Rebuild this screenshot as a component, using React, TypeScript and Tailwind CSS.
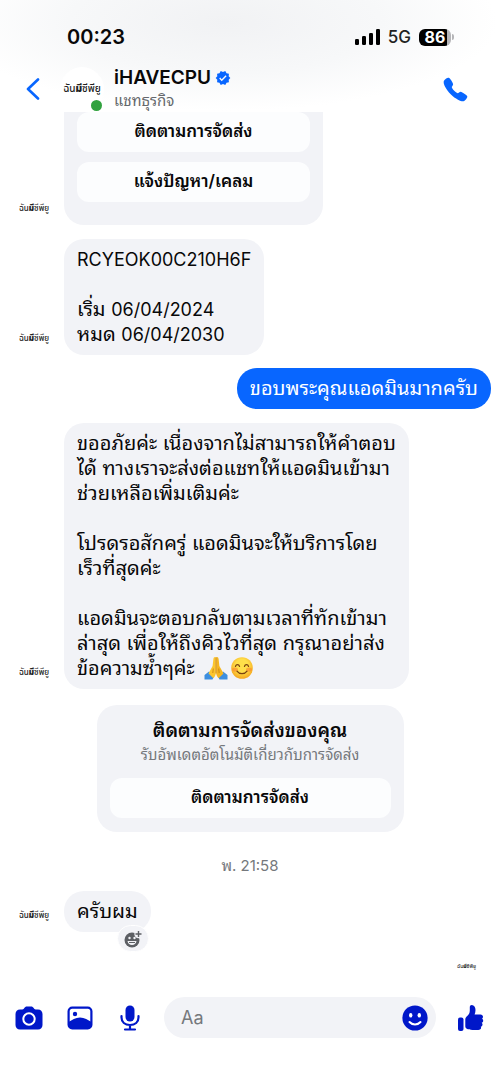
import { IoCall } from 'react-icons/io5';
import { MdVerified } from 'react-icons/md';

const AUTO_REPLY = [
  'ขออภัยค่ะ เนื่องจากไม่สามารถให้คำตอบ',
  'ได้ ทางเราจะส่งต่อแชทให้แอดมินเข้ามา',
  'ช่วยเหลือเพิ่มเติมค่ะ',
  '',
  'โปรดรอสักครู่ แอดมินจะให้บริการโดย',
  'เร็วที่สุดค่ะ',
  '',
  'แอดมินจะตอบกลับตามเวลาที่ทักเข้ามา',
  'ล่าสุด เพื่อให้ถึงคิวไวที่สุด กรุณาอย่าส่ง',
];

function BrandMark({ className }: { className: string }) {
  return (
    <span className={`font-['Noto_Sans_Thai',sans-serif] leading-none font-medium whitespace-nowrap text-[#222222] ${className}`}>
      ฉัน<b className="font-black">มี</b>ซีพียู
    </span>
  );
}

function PageAvatar() {
  return (
    <div className="flex w-16 shrink-0 justify-center pb-3 pl-1">
      <BrandMark className="text-[8px]" />
    </div>
  );
}

function FoldedHands() {
  return (
    <svg viewBox="0 0 24 24" className="ml-1 inline-block h-6 w-6 align-[-5px]" aria-label="🙏" role="img">
      <path d="M0.5 23.5V19L5 15.500l5 5-1.500 3zM23.500 23.500V19L19 15.500l-5 5 1.500 3z" fill="#3d8fe0" />
      <path d="M11.800 1.200c-1.300-.7-2.200.3-2.400 1.800L8.600 10 4.500 17.500l4.800 4.700c1.800-1.600 2.500-3.400 2.500-5.400z" fill="#fcc62d" />
      <path d="M12.200 1.200c1.300-.7 2.200.3 2.400 1.800l.8 7 4.100 7.500-4.800 4.700c-1.800-1.600-2.500-3.400-2.500-5.400z" fill="#f5b51f" />
      <path d="M12 1.500v16M9.300 12.500 8.800 17M14.700 12.500l.5 4.500" stroke="#c47d0b" strokeWidth="0.8" fill="none" />
    </svg>
  );
}

function SmilingFace() {
  return (
    <svg viewBox="0 0 24 24" className="ml-[2px] inline-block h-6 w-6 align-[-5px]" aria-label="😊" role="img">
      <defs>
        <radialGradient id="face" cx="50%" cy="40%" r="60%">
          <stop offset="0.5" stopColor="#ffdf4a" />
          <stop offset="1" stopColor="#f5a51c" />
        </radialGradient>
      </defs>
      <circle cx="12" cy="12" r="10.8" fill="url(#face)" />
      <ellipse cx="5" cy="13.6" rx="3" ry="2" fill="#f8832f" opacity="0.6" />
      <ellipse cx="19" cy="13.6" rx="3" ry="2" fill="#f8832f" opacity="0.6" />
      <path
        d="M5.500 10.300c.6-2.300 3.400-2.300 4 0M14.500 10.300c.6-2.300 3.400-2.300 4 0M7 15.200c2.300 3.300 7.700 3.300 10 0"
        fill="none"
        stroke="#7a4210"
        strokeWidth="1.3"
        strokeLinecap="round"
      />
    </svg>
  );
}

function StatusBar() {
  return (
    <div className="flex items-center justify-between pt-6 pr-[46px] pl-[67px]">
      <span className="text-[20px] leading-[26px] font-semibold">00:23</span>
      <div className="flex items-center gap-2">
        <svg viewBox="0 0 25 16" className="h-4 w-[25px]" fill="#000">
          <rect x="0" y="10" width="4" height="6" rx="1.2" />
          <rect x="7" y="7" width="4" height="9" rx="1.2" />
          <rect x="14" y="4" width="4" height="12" rx="1.2" />
          <rect x="21" y="0" width="4" height="16" rx="1.2" />
        </svg>
        <span className="text-[17px] leading-[26px] font-medium text-[#222222]">5G</span>
        <div className="flex items-center gap-px">
          <span className="flex h-[17px] w-8 items-center justify-center rounded-md bg-[linear-gradient(90deg,#000_86%,#b5b5b8_86%)] text-[16px] leading-none font-bold text-white">
            86
          </span>
          <span className="h-[6px] w-[2px] rounded-r-full bg-[#b5b5b8]" />
        </div>
      </div>
    </div>
  );
}

function ChatHeader() {
  return (
    <div className="flex items-center pt-4 pr-[31px] pl-[26px]">
      <button type="button" aria-label="Back" className="w-[34px]">
        <svg viewBox="0 0 14 22" className="h-[22px] w-[14px]" fill="none" stroke="#0866ff" strokeWidth="2.6" strokeLinecap="round" strokeLinejoin="round">
          <path d="M12 1.500 2 11l10 9.500" />
        </svg>
      </button>
      <div className="relative flex h-11 w-11 items-center justify-center rounded-full bg-white">
        <BrandMark className="text-[10px]" />
        <span className="absolute right-[2px] bottom-0 h-[11px] w-[11px] rounded-full bg-[#31a23f]" />
      </div>
      <div className="min-w-0 flex-1 pl-[10px]">
        <h1 className="flex items-center gap-1 text-[19px] leading-6 font-semibold">
          iHAVECPU
          <MdVerified className="h-4 w-4 text-[#0866ff]" />
        </h1>
        <p className="text-[15px] leading-[22px] text-[#65686c]">แชทธุรกิจ</p>
      </div>
      <button type="button" aria-label="Call">
        <IoCall className="h-[27px] w-[27px] text-[#0866ff]" />
      </button>
    </div>
  );
}

function ReplyButton({ label }: { label: string }) {
  return (
    <button type="button" className="h-10 w-full rounded-xl bg-[#fcfdfe] text-[17px] font-semibold">
      {label}
    </button>
  );
}

function Composer() {
  return (
    <footer className="flex items-center pt-7 pr-4 pb-12 pl-[15px]">
      <div className="flex gap-6 text-[#0017c9]">
        <button type="button" aria-label="Camera">
          <svg viewBox="0 0 28 26" className="h-[26px] w-7" fill="currentColor">
            <path d="M9.500 2.800C10.300 1.800 11 1.500 12 1.500h4c1 0 1.700.3 2.500 1.300l.7.9c.4.5.9.8 1.600.8H23c2.700 0 4.500 1.800 4.500 4.500V20c0 2.700-1.800 4.500-4.500 4.500H5C2.300 24.500.5 22.700.5 20V9c0-2.700 1.800-4.500 4.500-4.500h2.200c.7 0 1.200-.3 1.600-.8z" />
            <circle cx="14" cy="14" r="5.700" fill="none" stroke="#fff" strokeWidth="2" />
          </svg>
        </button>
        <button type="button" aria-label="Photos">
          <svg viewBox="0 0 26 26" className="h-[26px] w-[26px]">
            <rect x="1.600" y="2.600" width="22.800" height="20.800" rx="3.600" fill="none" stroke="currentColor" strokeWidth="2.200" />
            <circle cx="8" cy="9" r="2.200" fill="currentColor" />
            <path d="M1.500 17C5 15 8.500 12.500 13 12.500s8 2.500 11.500 4.500v3a3.500 3.500 0 0 1-3.500 3.500H5a3.500 3.500 0 0 1-3.500-3.500z" fill="currentColor" />
          </svg>
        </button>
        <button type="button" aria-label="Voice message">
          <svg viewBox="0 0 26 26" className="h-[26px] w-[26px]">
            <rect x="8.500" y="0.500" width="9" height="16" rx="4.500" fill="currentColor" />
            <path d="M4.500 11v1.500c0 4.500 3.500 7.500 8.500 7.500s8.500-3 8.500-7.500V11M13 20v4M8 24.500h10" fill="none" stroke="currentColor" strokeWidth="2.200" strokeLinecap="round" />
          </svg>
        </button>
      </div>
      <div className="ml-[21px] flex h-[41px] min-w-0 flex-1 items-center rounded-full bg-[#f2f3f7] pr-2 pl-[17px]">
        <input
          type="text"
          aria-label="Message"
          placeholder="Aa"
          className="min-w-0 flex-1 bg-transparent text-[18px] outline-none placeholder:text-[#75787c]"
        />
        <button type="button" aria-label="Emoji" className="text-[#0017c9]">
          <svg viewBox="0 0 26 26" className="h-[26px] w-[26px]">
            <circle cx="13" cy="13" r="12.600" fill="currentColor" />
            <ellipse cx="8.700" cy="10.300" rx="1.700" ry="2.200" fill="#fff" />
            <ellipse cx="17.300" cy="10.300" rx="1.700" ry="2.200" fill="#fff" />
            <path d="M7.500 17c2.800 3.200 8.200 3.200 11 0" fill="none" stroke="#fff" strokeWidth="2" strokeLinecap="round" />
          </svg>
        </button>
      </div>
      <button type="button" aria-label="Like" className="ml-[21px] text-[#0017c9]">
        <svg viewBox="0 0 27 28" className="h-7 w-[27px]" fill="currentColor">
          <rect x="1" y="13.500" width="5.500" height="13.500" rx="2" />
          <path d="M8.300 15.500c0-1.500.6-2.400 1.700-3.300 1.800-1.500 2.800-3.200 2.800-5.700V3.300c0-1.500.8-2.300 2-2.300 2.300 0 3.700 2.200 3.700 5 0 1.800-.4 3.200-.9 4.500h5.900c1.500 0 2.500 1 2.500 2.300 0 .9-.4 1.500-1 1.900.7.4 1.200 1.100 1.200 2 0 1-.6 1.800-1.500 2.100.5.4.8 1 .8 1.700 0 1.100-.7 1.900-1.700 2.200.2.300.3.700.3 1.100 0 1.300-1.200 2.100-2.900 2.100h-5.700c-2.500 0-4.300-.4-5.700-1.200-1-.6-1.500-1.300-1.500-2.500z" />
        </svg>
      </button>
    </footer>
  );
}

export default function App() {
  return (
    <div className="min-h-screen bg-white font-[Inter,'Noto_Sans_Thai_Looped','Noto_Sans_Thai','Noto_Sans',sans-serif] text-[#080809]">
      <header className="bg-[radial-gradient(ellipse_at_45%_20%,#f1f2f4_0%,#f7f8f9_40%,#ffffff_70%)]">
        <StatusBar />
        <ChatHeader />
      </header>

      <main>
        <div className="flex items-end">
          <PageAvatar />
          <div className="flex w-[259px] flex-col gap-[10px] rounded-b-[20px] bg-[#f2f3f7] px-[13px] pb-[23px]">
            <ReplyButton label="ติดตามการจัดส่ง" />
            <ReplyButton label="แจ้งปัญหา/เคลม" />
          </div>
        </div>

        <div className="mt-[14px] flex items-end">
          <PageAvatar />
          <p className="rounded-[20px] bg-[#f2f3f7] px-[13px] py-2 text-[20px] leading-[25px]">
            <span className="text-[18px]">RCYEOK00C210H6F</span>
            <br />
            <br />
            เริ่ม <span className="text-[18px]">06/04/2024</span>
            <br />
            หมด <span className="text-[18px]">06/04/2030</span>
          </p>
        </div>

        <div className="mt-[13px] flex justify-end pr-[9px]">
          <p className="rounded-[20px] bg-[#0866ff] px-[13px] py-2 text-[20px] leading-[25px] text-white">
            ขอบพระคุณแอดมินมากครับ
          </p>
        </div>

        <div className="mt-[14px] flex items-end">
          <PageAvatar />
          <p className="rounded-[20px] bg-[#f2f3f7] px-[13px] py-2 text-[20px] leading-[25px] whitespace-pre-line">
            {AUTO_REPLY.join('\n')}
            {'\n'}ข้อความซ้ำๆค่ะ <FoldedHands />
            <SmilingFace />
          </p>
        </div>

        <section className="mx-auto mt-4 w-[307px] rounded-[20px] bg-[#f2f3f7] px-[13px] pt-[14px] pb-[14px] text-center">
          <h2 className="text-[19px] leading-6 font-semibold">ติดตามการจัดส่งของคุณ</h2>
          <p className="mb-[11px] text-[15px] leading-6 text-[#75787c]">รับอัพเดตอัตโนมัติเกี่ยวกับการจัดส่ง</p>
          <ReplyButton label="ติดตามการจัดส่ง" />
        </section>

        <p className="mt-[22px] text-center text-[15px] leading-6 text-[#75787c]">พ. 21:58</p>

        <div className="mt-[13px] flex items-end">
          <PageAvatar />
          <div className="relative">
            <p className="rounded-[20px] bg-[#f2f3f7] px-[13px] py-2 text-[20px] leading-[25px]">ครับผม</p>
            <button
              type="button"
              aria-label="React"
              className="absolute right-[2px] -bottom-5 flex h-[27px] w-8 items-center justify-center rounded-full border border-white bg-[#f2f3f7]"
            >
              <svg viewBox="0 0 18 18" className="h-[18px] w-[18px]">
                <circle cx="8" cy="10" r="7.500" fill="#5c5f64" />
                <circle cx="14.500" cy="4" r="4.200" fill="#f2f3f7" />
                <path d="M14.500 1v6M11.500 4h6" stroke="#5c5f64" strokeWidth="1.400" />
                <circle cx="5.500" cy="8" r="1.200" fill="#f2f3f7" />
                <circle cx="10.500" cy="8" r="1.200" fill="#f2f3f7" />
                <path d="M3.500 11h9c-.4 2.500-2.200 4-4.500 4s-4.100-1.500-4.500-4z" fill="#f2f3f7" />
                <path d="M5 12.500h6" stroke="#5c5f64" strokeWidth="1" />
              </svg>
            </button>
          </div>
        </div>

        <div className="mt-8 flex justify-end pr-6">
          <BrandMark className="text-[5px]" />
        </div>
      </main>

      <Composer />
    </div>
  );
}
